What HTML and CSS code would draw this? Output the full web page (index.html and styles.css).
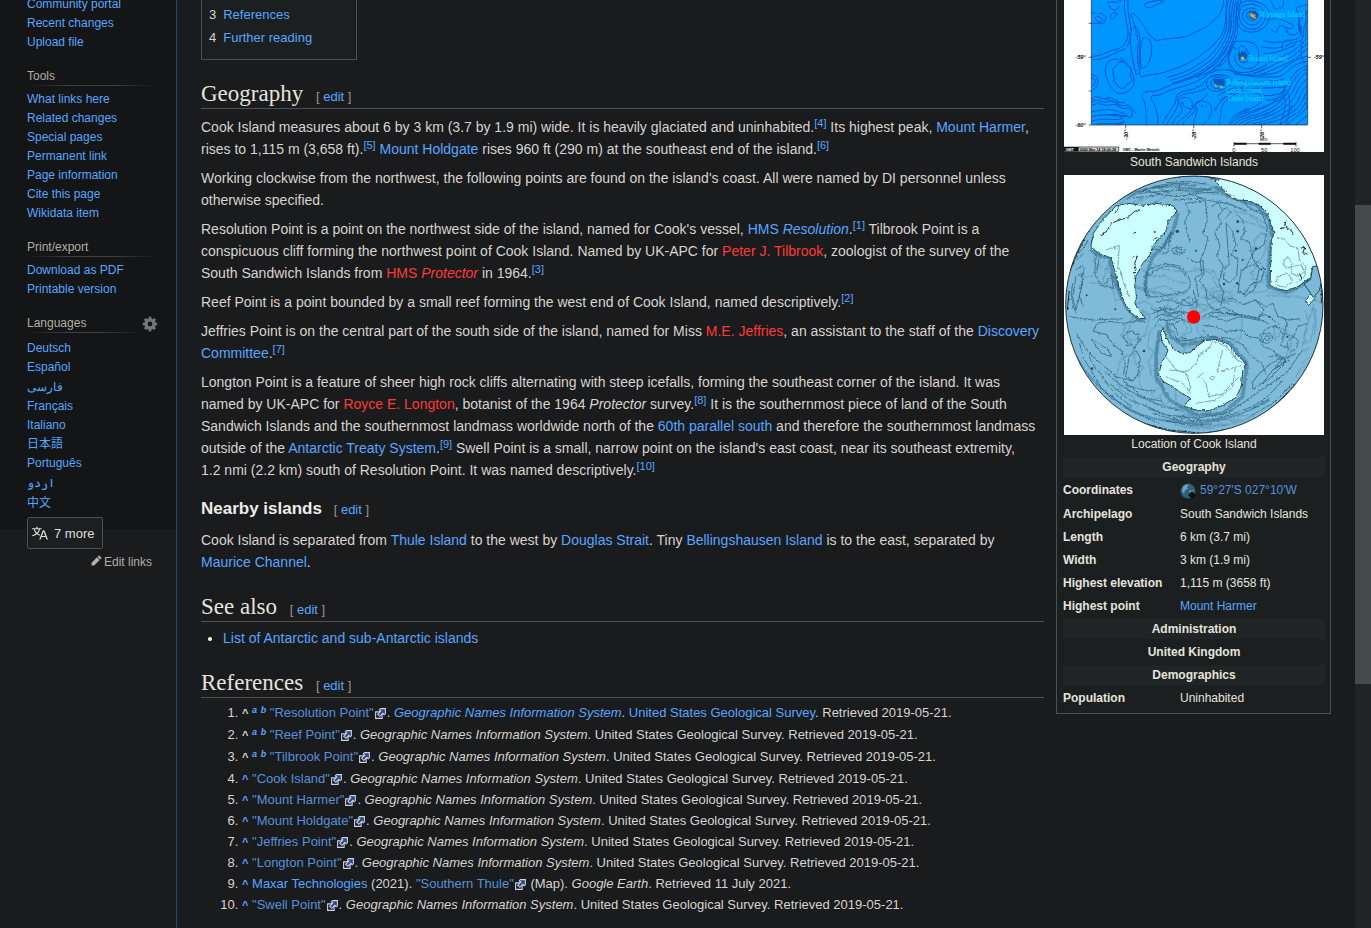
FILE: index.html
```html
<!DOCTYPE html>
<html lang="en">
<head>
<meta charset="utf-8">
<title>Cook Island, South Sandwich Islands</title>
<link rel="stylesheet" href="styles.css">
</head>
<body>
<svg class="defs" aria-hidden="true">
  <symbol id="ext" viewBox="0 0 12 12">
    <path d="M1.5 4.5h6v6h-6z" fill="#1a1b1d" stroke="#cdd3f5"/>
    <path d="M5.8 1H11v5.4L9.4 7.9 8.1 6.6 5.4 9.3 2.7 6.7l2.8-2.8L4.2 2.5z" fill="#cdd3f5"/>
    <path d="M10 2v4.9L8.2 5.1 5.3 8 4.1 6.7 7 3.8 5.1 2z" fill="#2b4a74"/>
  </symbol>
  <filter id="rough" x="-5%" y="-5%" width="110%" height="110%">
    <feTurbulence type="fractalNoise" baseFrequency="0.12" numOctaves="3" seed="7"/>
    <feDisplacementMap in="SourceGraphic" scale="9" xChannelSelector="R" yChannelSelector="G"/>
  </filter>
  <filter id="wavy" x="-5%" y="-5%" width="110%" height="110%">
    <feTurbulence type="fractalNoise" baseFrequency="0.06" numOctaves="2" seed="3"/>
    <feDisplacementMap in="SourceGraphic" scale="6" xChannelSelector="R" yChannelSelector="G"/>
  </filter>
</svg>
<div class="page">
  <nav class="sidebar" aria-label="Site">
    <section class="portal portal-first">
      <ul>
        <li><a href="#">Community portal</a></li>
        <li><a href="#">Recent changes</a></li>
        <li><a href="#">Upload file</a></li>
      </ul>
    </section>
    <section class="portal">
      <h3>Tools</h3>
      <ul>
        <li><a href="#">What links here</a></li>
        <li><a href="#">Related changes</a></li>
        <li><a href="#">Special pages</a></li>
        <li><a href="#">Permanent link</a></li>
        <li><a href="#">Page information</a></li>
        <li><a href="#">Cite this page</a></li>
        <li><a href="#">Wikidata item</a></li>
      </ul>
    </section>
    <section class="portal">
      <h3>Print/export</h3>
      <ul>
        <li><a href="#">Download as PDF</a></li>
        <li><a href="#">Printable version</a></li>
      </ul>
    </section>
    <section class="portal languages">
      <div class="lang-head">
        <h3>Languages</h3>
        <button class="gear" type="button" aria-label="Language settings">
          <svg viewBox="0 0 20 20" width="16" height="16"><g fill="#72777d"><path id="tooth" d="M8.4 1h3.2l.6 4H7.800zM8.400 19h3.200l.6-4H7.800z"/><use href="#tooth" transform="rotate(45 10 10)"/><use href="#tooth" transform="rotate(90 10 10)"/><use href="#tooth" transform="rotate(135 10 10)"/></g><circle cx="10" cy="10" r="5" fill="none" stroke="#72777d" stroke-width="4"/></svg>
        </button>
      </div>
      <ul>
        <li><a href="#">Deutsch</a></li>
        <li><a href="#">Español</a></li>
        <li class="tall"><a href="#" lang="fa">فارسی</a></li>
        <li><a href="#">Français</a></li>
        <li><a href="#">Italiano</a></li>
        <li><a href="#" lang="ja">日本語</a></li>
        <li><a href="#">Português</a></li>
        <li class="tall"><a href="#" lang="ur">اردو</a></li>
        <li class="tall"><a href="#" lang="zh">中文</a></li>
      </ul>
      <button class="more" type="button">
        <svg viewBox="0 0 20 20" width="16" height="16"><path fill="#e0ddd8" d="M20 18h-1.440a.6.6 0 0 1-.4-.12.8.8 0 0 1-.23-.31L17 15h-5l-1 2.540a.8.8 0 0 1-.22.3.6.6 0 0 1-.4.14H9l4.550-11.470h1.890zm-3.530-4.310L14.890 9.500a12 12 0 0 1-.39-1.240q-.09.37-.19.69l-.19.56-1.580 4.190zm-6.300-1.580a13.400 13.400 0 0 1-2.910-1.410 11.460 11.460 0 0 0 2.810-5.370H12V4H7.310a4 4 0 0 0-.2-.56C6.870 2.790 6.600 2 6.600 2l-1.470.5s.4.89.6 1.500H0v1.330h2.150A11.230 11.230 0 0 0 5 10.700a17.200 17.200 0 0 1-5 2.100q.56.82.87 1.380a23.300 23.300 0 0 0 5.220-2.510 15.600 15.600 0 0 0 3.560 1.770zM3.630 5.330h4.910a8.100 8.100 0 0 1-2.450 4.450 9.100 9.100 0 0 1-2.460-4.450"/></svg>
        7 more
      </button>
      <p class="edit-links"><a href="#"><svg viewBox="0 0 20 20" width="11" height="11"><path fill="#b5b1aa" d="M16.770 8l1.940-2a1 1 0 0 0 0-1.410l-3.340-3.300a1 1 0 0 0-1.410 0L12 3.230zM1 14.250V19h4.750l9.960-9.960-4.750-4.750z"/></svg>Edit links</a></p>
    </section>
  </nav>

  <main class="content">
    <article class="article">
      <ul class="toc">
        <li><span>3</span><a href="#references">References</a></li>
        <li><span>4</span><a href="#further">Further reading</a></li>
      </ul>

      <h2>Geography <span class="edit">[ <a href="#">edit</a> ]</span></h2>
      <p>Cook Island measures about 6 by 3 km (3.7 by 1.9 mi) wide. It is heavily glaciated and uninhabited.<sup><a href="#">[4]</a></sup> Its highest peak, <a href="#">Mount Harmer</a>, rises to 1,115 m (3,658 ft).<sup><a href="#">[5]</a></sup> <a href="#">Mount Holdgate</a> rises 960 ft (290 m) at the southeast end of the island.<sup><a href="#">[6]</a></sup></p>
      <p>Working clockwise from the northwest, the following points are found on the island's coast. All were named by DI personnel unless otherwise specified.</p>
      <p>Resolution Point is a point on the northwest side of the island, named for Cook's vessel, <a href="#">HMS <i>Resolution</i></a>.<sup><a href="#">[1]</a></sup> Tilbrook Point is a conspicuous cliff forming the northwest point of Cook Island. Named by UK-APC for <a class="new" href="#">Peter J. Tilbrook</a>, zoologist of the survey of the South Sandwich Islands from <a class="new" href="#">HMS <i>Protector</i></a> in 1964.<sup><a href="#">[3]</a></sup></p>
      <p>Reef Point is a point bounded by a small reef forming the west end of Cook Island, named descriptively.<sup><a href="#">[2]</a></sup></p>
      <p>Jeffries Point is on the central part of the south side of the island, named for Miss <a class="new" href="#">M.E. Jeffries</a>, an assistant to the staff of the <a href="#">Discovery Committee</a>.<sup><a href="#">[7]</a></sup></p>
      <p>Longton Point is a feature of sheer high rock cliffs alternating with steep icefalls, forming the southeast corner of the island. It was named by UK-APC for <a class="new" href="#">Royce E. Longton</a>, botanist of the 1964 <i>Protector</i> survey.<sup><a href="#">[8]</a></sup> It is the southernmost piece of land of the South Sandwich Islands and the southernmost landmass worldwide north of the <a href="#">60th parallel south</a> and therefore the southernmost landmass outside of the <a href="#">Antarctic Treaty System</a>.<sup><a href="#">[9]</a></sup> Swell Point is a small, narrow point on the island's east coast, near its southeast extremity, 1.2&nbsp;nmi (2.2&nbsp;km) south of Resolution Point. It was named descriptively.<sup><a href="#">[10]</a></sup></p>

      <h3>Nearby islands <span class="edit">[ <a href="#">edit</a> ]</span></h3>
      <p>Cook Island is separated from <a href="#">Thule Island</a> to the west by <a href="#">Douglas Strait</a>. Tiny <a href="#">Bellingshausen Island</a> is to the east, separated by <a href="#">Maurice Channel</a>.</p>

      <h2>See also <span class="edit">[ <a href="#">edit</a> ]</span></h2>
      <ul class="see-also">
        <li><a href="#">List of Antarctic and sub-Antarctic islands</a></li>
      </ul>

      <h2 id="references">References <span class="edit">[ <a href="#">edit</a> ]</span></h2>
      <ol class="references">
        <li class="multi"><b>^</b> <sup><a href="#">a</a></sup> <sup><a href="#">b</a></sup> <a class="ext" href="#">"Resolution Point"<svg><use href="#ext"/></svg></a>. <a href="#"><i>Geographic Names Information System</i></a>. <a href="#">United States Geological Survey</a>. Retrieved 2019-05-21.</li>
        <li class="multi"><b>^</b> <sup><a href="#">a</a></sup> <sup><a href="#">b</a></sup> <a class="ext" href="#">"Reef Point"<svg><use href="#ext"/></svg></a>. <i>Geographic Names Information System</i>. United States Geological Survey. Retrieved 2019-05-21.</li>
        <li class="multi"><b>^</b> <sup><a href="#">a</a></sup> <sup><a href="#">b</a></sup> <a class="ext" href="#">"Tilbrook Point"<svg><use href="#ext"/></svg></a>. <i>Geographic Names Information System</i>. United States Geological Survey. Retrieved 2019-05-21.</li>
        <li><a href="#"><b>^</b></a> <a class="ext" href="#">"Cook Island"<svg><use href="#ext"/></svg></a>. <i>Geographic Names Information System</i>. United States Geological Survey. Retrieved 2019-05-21.</li>
        <li><a href="#"><b>^</b></a> <a class="ext" href="#">"Mount Harmer"<svg><use href="#ext"/></svg></a>. <i>Geographic Names Information System</i>. United States Geological Survey. Retrieved 2019-05-21.</li>
        <li><a href="#"><b>^</b></a> <a class="ext" href="#">"Mount Holdgate"<svg><use href="#ext"/></svg></a>. <i>Geographic Names Information System</i>. United States Geological Survey. Retrieved 2019-05-21.</li>
        <li><a href="#"><b>^</b></a> <a class="ext" href="#">"Jeffries Point"<svg><use href="#ext"/></svg></a>. <i>Geographic Names Information System</i>. United States Geological Survey. Retrieved 2019-05-21.</li>
        <li><a href="#"><b>^</b></a> <a class="ext" href="#">"Longton Point"<svg><use href="#ext"/></svg></a>. <i>Geographic Names Information System</i>. United States Geological Survey. Retrieved 2019-05-21.</li>
        <li><a href="#"><b>^</b></a> <a href="#">Maxar Technologies</a> (2021). <a class="ext" href="#">"Southern Thule"<svg><use href="#ext"/></svg></a> (Map). <i>Google Earth</i>. Retrieved 11 July 2021.</li>
        <li><a href="#"><b>^</b></a> <a class="ext" href="#">"Swell Point"<svg><use href="#ext"/></svg></a>. <i>Geographic Names Information System</i>. United States Geological Survey. Retrieved 2019-05-21.</li>
      </ol>
    </article>

    <aside class="infobox">
      <table>
        <tr><td colspan="2" class="figure">
          <svg class="chart" viewBox="42 0 780 456" role="img" aria-label="Chart of the South Sandwich Islands">
            <defs><clipPath id="sea"><path d="M124 0h649v375H124z"/></clipPath></defs>
            <path fill="#fff" d="M42 0h780v459H42z"/>
            <path fill="#0096ff" d="M124 0h649v375H124z"/>
            <g clip-path="url(#sea)"><g filter="url(#wavy)" fill="none" stroke="#0a56cc" stroke-width="3" stroke-linejoin="round">
              <path d="M124 170C160 166 180 150 200 148C225 140 236 120 234 90C228 60 220 30 224 0M124 180C170 178 190 160 212 152C240 142 246 110 241 76C236 50 232 26 234 0"/>
              <path d="M520 0C524 20 512 44 486 66C470 84 440 94 428 100C410 118 350 112 322 122C300 116 288 86 274 68C262 46 246 34 243 44C248 62 258 84 262 112C268 130 258 160 264 190C272 220 266 226 276 230C300 222 330 224 352 214C390 202 430 186 462 158C490 140 518 110 524 80C530 50 526 30 530 0"/>
              <path d="M240 100C250 70 262 78 268 104C274 130 264 160 270 196C272 212 266 220 258 224C252 200 238 130 240 100M283 112C306 108 310 150 300 178C288 210 268 216 272 180C270 150 272 118 283 112"/>
              <path d="M124 40C134 36 142 44 152 40C166 42 172 54 162 68C150 76 130 66 124 72M135 52C146 46 156 54 158 62C150 70 136 64 135 52M170 10C180 0 200 14 214 0M176 14C182 30 200 38 208 18M180 50C186 40 196 30 202 44C190 52 186 60 180 50M284 12C300 2 320 4 338 0M284 12C280 26 306 26 318 14C328 8 340 10 346 0"/>
              <path d="M190 206C206 192 204 182 214 184C226 184 226 196 240 204C252 212 232 222 246 236C250 252 222 250 224 264C200 270 206 248 190 244C198 230 184 220 190 206M172 190C160 210 168 230 176 250C186 270 200 284 216 280C236 276 256 262 252 238C248 214 230 180 214 178C194 178 180 176 172 190"/>
              <path d="M124 234C140 236 138 250 128 258M124 224C150 226 150 256 128 270M124 300C140 276 150 304 170 294C190 288 206 312 224 308M124 308C142 290 152 314 176 304C196 298 204 322 228 316C240 310 246 330 258 340M124 318C148 302 160 322 184 314C200 308 212 332 234 324C250 330 250 350 240 352C220 346 200 340 176 346M124 336C150 330 170 326 196 332C220 342 236 338 228 350C204 350 170 338 124 350M124 364C160 350 190 364 214 356C230 362 222 370 200 375M140 375C160 366 190 376 222 366"/>
              <path d="M290 375C286 350 292 320 280 300C268 284 284 270 300 274C320 278 340 262 356 258C400 240 440 236 470 208C500 186 530 150 542 120M322 375C328 350 318 330 312 310C296 292 304 284 326 286C344 276 366 268 390 262C430 250 460 238 484 212C510 190 540 160 548 124"/>
              <path d="M336 375C350 340 374 320 378 300C376 280 396 274 420 270C450 264 462 250 470 236M350 375C360 350 386 330 384 304C384 286 400 280 430 278C452 270 470 272 476 256M366 375C372 350 400 340 396 326C384 308 392 290 404 292C440 296 420 320 430 324C410 330 396 318 398 306M380 375C392 352 420 344 424 328C440 306 460 300 474 280M398 375C402 352 432 350 436 326C430 300 452 300 468 306C492 314 486 340 476 356C470 366 460 370 462 375M430 375C432 350 444 340 440 322"/>
              <path d="M536 0C524 30 534 60 528 88C518 124 498 148 478 170C440 200 400 222 352 232M544 0C532 34 542 66 534 94C526 128 506 154 486 178C446 210 402 232 356 242M552 0C540 30 550 70 540 98C534 132 514 162 490 186C452 218 410 238 366 250M558 0C546 34 556 74 548 100C540 134 522 164 498 190C470 214 440 226 404 242M566 0C552 30 562 72 554 102C548 130 534 160 512 190C490 210 466 222 440 232M574 0C564 26 562 70 562 100C556 126 542 160 524 186C506 206 494 212 482 220"/>
              <path d="M586 30C606 18 630 26 634 46C636 72 606 84 588 68C574 54 574 40 586 30M578 18C610 4 642 20 646 46C646 86 602 98 580 78C562 58 564 32 578 18M570 10C610 -8 654 10 660 44C660 92 600 110 572 86C554 62 556 28 570 10M594 36C610 28 626 36 624 50C616 66 598 62 592 54C588 46 590 40 594 36"/>
              <path d="M664 90C680 96 674 112 686 80C700 70 706 84 714 100C730 112 744 100 750 90C742 70 752 60 740 30C734 18 760 20 773 12M660 0C676 20 664 30 690 26C706 16 700 0 700 0M650 60C690 50 700 62 720 70C740 76 726 96 706 80M773 30C760 50 744 60 748 80C760 100 752 116 730 120C700 120 690 138 700 150M773 60C756 80 764 100 756 118C744 130 720 124 708 140"/>
              <path d="M560 150C540 130 540 124 568 124C600 120 628 130 626 164C630 190 618 208 586 206C560 200 550 180 556 160M568 152C562 134 584 132 592 152C606 176 592 190 578 188C562 182 566 166 568 152M548 140C522 164 540 196 556 214C580 222 616 216 636 200M542 152C528 180 536 206 556 222C590 230 628 222 650 196"/>
              <path d="M486 240C494 228 520 230 526 246C526 260 500 272 488 262C480 254 482 248 486 240M474 238C484 220 530 218 542 238C560 260 500 282 482 270C466 260 468 250 474 238M480 220C500 206 540 206 570 220C590 232 640 232 690 230C712 220 724 190 773 184M530 208C550 214 570 230 610 226C650 226 690 220 700 206C720 190 740 176 773 168"/>
              <path d="M773 196C740 206 724 230 716 250C700 270 690 296 650 320C610 340 560 350 538 375M773 206C746 214 730 240 720 262C708 290 690 310 660 326C620 350 570 350 552 375M773 218C750 226 740 250 728 274C710 304 690 320 666 334C630 352 590 352 566 375M773 236C756 246 744 266 734 290C716 316 700 324 672 342C646 356 608 358 580 375M773 256C752 270 754 290 740 308C720 330 704 336 680 350C656 362 628 364 600 375M773 272C758 290 762 304 744 322C728 342 712 342 690 358C670 366 650 368 620 375M773 296C764 310 758 330 740 340C720 350 706 364 690 375M773 320C762 336 740 350 724 362L712 375M773 346C764 350 752 362 738 375"/>
              <path d="M536 375C550 352 574 340 600 336C634 324 660 312 690 300C706 284 700 262 704 250M540 362C550 346 576 332 600 326C630 316 640 300 634 286C616 274 600 280 580 270C560 280 540 290 520 310C510 330 516 340 506 375M496 330C510 300 530 290 554 276M700 290C714 310 700 340 690 375M716 286C724 310 716 350 708 375M752 120C760 140 744 160 764 190"/>
              <path d="M773 112C750 136 730 160 690 172C660 180 640 206 600 214M773 128C752 148 736 170 700 182C670 190 650 212 612 220M773 144C756 160 730 184 706 192C680 202 660 216 630 224M640 120C660 130 700 130 716 118M634 140C660 146 690 148 720 132M640 160C664 160 700 156 740 130M560 240C600 250 660 246 700 238M566 262C610 268 660 262 706 262M640 286C670 290 690 280 712 270M650 300C676 300 690 292 716 278M500 290C520 276 540 266 560 262M508 302C530 286 556 276 580 262"/>
              <path stroke-width="4" opacity=".6" d="M540 40C544 60 536 80 542 98M740 70C756 86 758 92 748 100M562 340L600 330M640 350L680 326M700 356C710 346 720 330 734 318M768 30V110M770 200V330M480 232C490 224 520 224 528 238M160 296C180 296 190 310 210 308"/>
              <circle cx="215" cy="186" r="2"/><circle cx="456" cy="317" r="2"/>
            </g></g>
            <path fill="#083b9c" opacity=".65" d="M566 156l6 4 4-10 4 8 6-8 2 12 6-2-4 16-22 2zM490 236l30 2 4 20-30-4zM598 36l18-2 8 12-6 14-20-6z"/>
            <path fill="#d7a62a" d="M598 42l8-3 5 5 6-1-2 7 5 5-5 3-4-5-8-1zM572 172l6-3 6 4-2 7-8 1zM494 252l6 2 2 6-8-2zM508 257l10 1 3 5-9 1z"/>
            <g class="place-names"><text x="626" y="52">Montagu Island</text><text x="593" y="184">Bristol Island</text><text x="528" y="254">Bellingshausen Island</text><text x="528" y="279">Cook Island</text><text x="530" y="302">Thule Island</text></g>
            <path fill="none" stroke="#222" stroke-width="2" d="M124 0v375h649M116 70h8M116 172h8M116 273h8M116 375h8M773 172h10M227 375v10M431 375v10M635 375v10M773 0v375"/>
            <g class="degrees"><text x="76" y="178">-59°</text><text x="76" y="382">-60°</text><text x="791" y="178">-59°</text><text transform="translate(234 420) rotate(-90)">-30°</text><text transform="translate(438 420) rotate(-90)">-28°</text><text transform="translate(642 420) rotate(-90)">-26°</text></g>
            <g class="scale"><text x="630" y="423">km</text><text x="547" y="456">0</text><text x="633" y="456">50</text><text x="721" y="456">100</text></g>
            <path fill="#111" d="M42 440h44v15H42zM552 428h38v6h-38zM626 428h36v6h-36zM700 428h38v6h-38z"/>
            <path fill="#ddd" stroke="#111" stroke-width="2" d="M86 441h120v13H86z"/>
            <path fill="none" stroke="#111" stroke-width="2" d="M552 426v14M738 426v14M552 431h186"/>
            <g class="imprint"><text x="47" y="452" fill="#fff">GMT</text><text x="89" y="452">2006 Mar 14 18:00:28</text><text x="218" y="452">OMC - Martin Weinelt</text></g>
          </svg>
          <div class="caption">South Sandwich Islands</div>
        </td></tr>
        <tr><td colspan="2" class="figure">
          <svg class="globe" viewBox="24 15 780 780" role="img" aria-label="Location of Cook Island on a globe">
            <defs><clipPath id="disc"><circle cx="415" cy="404" r="386"/></clipPath></defs>
            <path fill="#fff" d="M24 15h780v780H24z"/>
            <circle cx="415" cy="404" r="386" fill="#7ebbd9"/>
            <g clip-path="url(#disc)">
              <g fill="none" stroke="#39708f" stroke-width="11" opacity=".55" stroke-linejoin="round" filter="url(#rough)">
                <path d="M104 240L130 258L160 262L172 320L190 370L214 416L244 446L270 450M366 130L352 180L322 230L290 260L270 320L268 360L280 384M480 50L520 80L600 104L640 150L650 200L640 260L636 350L690 366L730 350L790 310M330 460L345 500L380 524L420 520L470 502L520 520L574 580L560 680L500 730L420 735L340 690L300 620L300 560L310 480"/>
                <path stroke-width="6" d="M70 200C110 130 180 80 260 60C330 40 400 60 470 60M60 560C120 660 220 740 330 752C420 770 520 760 640 690"/>
              </g>
              <use href="#seabed" transform="rotate(184 415 404)" opacity=".45"/>
              <g fill="#ccffff" stroke="#24485c" stroke-width="3" stroke-linejoin="round" filter="url(#rough)">
                <path d="M104 232L112 190L140 150L180 108L214 100L260 106L300 100L352 108L364 124L350 140L336 156L330 186L306 208L290 230L282 254L260 280L250 300L240 316L236 350L242 380L236 398L244 414L268 444L250 446L226 430L206 400L190 356L178 310L166 264L150 258L132 252Z"/>
                <path d="M476 32L500 24C600 -10 840 100 820 300L788 296L770 290L764 322L744 336L726 350L690 362L662 356L642 346L644 280L646 210L654 190L644 160L634 130L612 108L578 92L540 90L512 72L494 50Z"/>
                <path d="M748 392L764 372L780 366L776 386L756 408Z"/>
                <path d="M322 474L330 500L340 520L356 540L380 550L402 548L424 528L446 512L480 508L520 524L544 556L570 580L560 604L556 650L540 682L500 706L460 722L424 722L384 708L404 684L380 672L350 650L324 636L308 616L316 580L330 556L336 540L318 516L314 488Z"/>
              </g>
              <path fill="#7bb8d8" stroke="#24485c" stroke-width="3" d="M770 290l10-2 22 24-12 50-18 20-28-40 20-14z"/>
              <g fill="none" stroke="#1e2c33" stroke-width="3" stroke-linejoin="round" filter="url(#rough)">
                <path d="M164 160L196 148L214 144L236 124L252 120M132 196L150 186L164 164M230 262L244 258L236 280L240 298L230 312M176 130L190 112M672 176l18-4 14 8 10 14M690 150l-4 18M732 230l14 4-6 14 14 4M230 190l12-4M292 210l12-8M730 310l8 16"/>
                <path d="M30 330C60 260 80 210 110 160C130 130 160 100 200 80M360 20C420 14 460 20 480 28M34 420l6-60M250 756L340 780L440 790L520 778M660 704L720 640M796 340v60"/>
              </g>
              <g id="seabed" fill="none" stroke="#2c5a74" stroke-width="2.200" stroke-linejoin="round" filter="url(#rough)">
                <path d="M280 250l20-24 24 10 14-40 16-8M290 240c20-10 24 20 46 6l8-60M276 300c-10 40-12 60-4 78c30 10 80-8 110-12c30-6 24-40 6-60c-20-30-70-30-110-6M280 316c30-30 80-44 110 0M346 240c14-14 40-10 40 2c-6 14-36 16-40-2M356 240c8-6 20-4 22 2c-6 6-18 6-22-2M392 264l30 14 18-6 4 40-14 20 20 26 4 40 20 24 30-10 40 20"/>
                <path d="M388 100l60-8 6 60-14 40 16 10-10 40-14 30 6 40-20 10 10 60M388 100l12 26-14 30 16 60M466 110l20-12 14 24-14 16 10 20-20 30 16 40-10 30 20 30-14 50 14 30-8 40M500 120c8-10 24-6 22 10l-18 20M510 160l20 24 10 40-14 30 20 14-4 50-20 20-20-10 4-34 14-10zM540 130l20 20 8 36-14 20 26 10 10 50 20 30-14 60-24 20-30-10M560 90l20 24 40 20 14 40-10 50-30 20-20 40-14 20M556 300l50-24 20 20-10 36-30 10-20 30-20-10z"/>
                <path d="M600 390l30 20 20-10 16 40 30 10 40-4M460 370l30 24 40-10 30 20 40-14 24 30-20 30-50-10-44 14-50-20M470 410l30 20 60 4 30 10 40-10 40 30M438 440l30-14 60 6 70 10 40 20"/>
                <path d="M438 466l40 4 30 14 50-4 20 20 30 4 14 26 30 10 20 30 50-20M440 480l20 20 60 4 40 20 20 30 40 30 10 30M610 500l20-24 30-10 24 30-10 30 20 6M616 502c10-20 30-16 34 0c-6 24-30 24-34 0M626 504c4-8 14-8 16 0c-4 10-14 10-16 0M700 540c-20-20 10-50 24-30c8 16-10 40-24 30M680 440l14 20-10 30 30 10 10-30 30-10M590 636c30-40 60-60 90-76l10 16-50 50-50 30zM620 640l30-40 50-30M560 700l70-50 60-40 50-70"/>
                <path d="M112 484l10-24 40-6 40 6 40-8 30 6M112 484l40 10 20 30 26 20 10 40-6 30M200 500l14-12 16-6 6 12 14-2-6 14 12 4-14 10-6 14-10-10-16 4 4-12zM106 508l50 30 10 22-30-10zM220 560l20-18 12 20-6 50-14 20-24-10zM60 490l40 60 80 70 50 14M128 600c30 60 60 80 100 110M140 600l60 50 60 34 60 10M160 640l60 50 90 34M200 630l60 50 60 30 50 10M80 560l60 100 80 60 90 40M208 646c30 6 60 20 90 16M70 520l10 30M100 560l20 40"/>
                <path d="M50 380l10-60 16-10 4 30-20 80zM60 300c20-20 30-10 20 20l-10 60 14 30M120 250l-4 60 20 36 40 10M130 260l-8 50M60 250c10 0 20-10 36-40M50 340c-8 40 0 70 10 90M62 270l20-20M150 340l16-26 6 40M40 440l70 10 90-4"/>
                <path d="M210 88c60-40 120-50 190-48M230 84l80-10 60 6 50-10 70-4M250 70l120-10 60 4 50-14M290 54l60-10 70 4M330 38l60-4 60 8M350 90l90-6M400 72l60 20 60 10 50 20M260 60l60 14M370 40v26M300 48l40 22"/>
                <path d="M284 416l20 8 20-10 30 6 20-16 30 4M290 430l30-10 20 14 40-10 20 6M300 396l40-6 30 10 30-20 20 20M288 448l30-16 40 10 30-14M296 470l14-24 20 6 40-8 30 14M350 460l20 40 30 10 50-10M346 480l20 30 60 4M410 360l14 40-4 16M378 386l30 20 20-16M310 410l30 20 30-6M322 446l20 20 30-12"/>
                <path d="M276 716l60 20 90 8 90-16 60-40M290 730l80 24 100-4 80-24M330 752l70 14 80-6M560 720c40-10 80-40 120-90M590 716l50-30M580 740l70-40 60-60M350 742l20 10 20-10 20 14 20-10M640 560l30-6 8 14-20 20M650 600l40-30"/>
              </g>
              <g fill="none" stroke="#7593a0" stroke-width="2.500" stroke-linejoin="round" filter="url(#rough)">
                <path d="M430 560l30-26 10-20 40 14 30 40 20 10M340 600l50 6 30-24 10-30 30-20M330 560l30 40 30 10 14 40-10 20M500 540l-10 40-6 26 40-10 32-10M526 540l14 26M430 620l20 20 8 40 40-8 30-30 20-20M440 610l-16 14M462 624c4-8 14-6 14 0c-4 6-12 6-14 0M420 700l60-10 50-40 8-60M330 620l50 20 24 30M150 240l40-14-4 60 20 60 16 40M178 240l-4-12M480 60l60 20"/>
                <path d="M656 206l26-2 20 24 24 6 4 34 20 22-4 30-26 20M664 320l30-10 16 20-20 22-30-6zM684 268l14-6 10 20-10 14-14-8zM706 290l30-6 10 22-20 12-20-8z"/>
              </g>
              <g fill="#24485c"><circle cx="545" cy="155" r="4"/><circle cx="545" cy="184" r="4"/><circle cx="364" cy="184" r="5"/><circle cx="544" cy="340" r="4"/><circle cx="600" cy="236" r="4"/><circle cx="540" cy="242" r="3"/><circle cx="264" cy="543" r="4"/><circle cx="108" cy="596" r="4"/><circle cx="420" cy="242" r="3"/><circle cx="504" cy="342" r="4"/><circle cx="616" cy="298" r="3"/><circle cx="178" cy="418" r="3"/><circle cx="560" cy="270" r="3"/><circle cx="92" cy="376" r="3"/><circle cx="296" cy="186" r="3"/><circle cx="694" cy="500" r="3"/><circle cx="640" cy="440" r="3"/></g>
            </g>
            <circle cx="415" cy="404" r="386" fill="none" stroke="#1d3542" stroke-width="3"/>
            <circle cx="413" cy="441" r="20" fill="#f00"/>
          </svg>
          <div class="caption">Location of Cook Island</div>
        </td></tr>
        <tr><th colspan="2" class="band">Geography</th></tr>
        <tr class="coords"><th scope="row">Coordinates</th><td><a class="ext" href="#"><svg viewBox="0 0 16 16" width="16" height="16"><circle cx="8" cy="8" r="7.500" fill="#2c6078"/><path fill="#6ea3b8" d="M3 4c2-3 5-3 6-2L7 4l1 2-3 1-1 4-2-3zM9 8l4-1 1 3-3 3z"/><path fill="#0c0f11" d="M12 8l4 4-4 4-4-4z"/></svg>59°27′S 027°10′W</a></td></tr>
        <tr><th scope="row">Archipelago</th><td>South Sandwich Islands</td></tr>
        <tr><th scope="row">Length</th><td>6 km (3.7 mi)</td></tr>
        <tr><th scope="row">Width</th><td>3 km (1.9 mi)</td></tr>
        <tr><th scope="row">Highest elevation</th><td>1,115 m (3658 ft)</td></tr>
        <tr><th scope="row">Highest point</th><td><a href="#">Mount Harmer</a></td></tr>
        <tr><th colspan="2" class="band">Administration</th></tr>
        <tr><th colspan="2" class="center">United Kingdom</th></tr>
        <tr><th colspan="2" class="band">Demographics</th></tr>
        <tr><th scope="row">Population</th><td>Uninhabited</td></tr>
      </table>
    </aside>
  </main>
  <div class="scrollbar" aria-hidden="true"><div class="thumb"></div></div>
</div>
</body>
</html>
```

FILE: styles.css
```css
* { box-sizing: border-box; }

body {
  margin: 0;
  background: #1a1b1d;
  color: #d8d4cf;
  font: 14px/22px "Liberation Sans", Arial, "Noto Sans CJK JP", sans-serif;
}

a { color: #58a6ff; text-decoration: none; }
a:hover { text-decoration: underline; }
a.new { color: #ff3939; }
a.ext { color: #5791d8; }
ul, ol { margin: 0; padding: 0; }
button { font: inherit; cursor: pointer; }

.defs { position: absolute; width: 0; height: 0; }

.page {
  display: flex;
  height: 100vh;
  overflow: hidden;
}

/* Sidebar */
.sidebar {
  flex: 0 0 177px;
  padding: 0 18px 0 27px;
  border-right: 1px solid #0d4d80;
  background: linear-gradient(#131516 529px, #1a1b1d 529px);
  font-size: 12px;
  line-height: 19px;
}
.portal { margin-bottom: 15px; }
.portal-first { margin-top: -5px; }
.portal ul { list-style: none; }
.portal h3 {
  margin: 0 0 4px;
  padding-bottom: 1px;
  background: linear-gradient(to right, transparent, #3d4144 33%, #3d4144 66%, transparent) bottom / 100% 1px no-repeat;
  color: #b3ada3;
  font-size: 12px;
  font-weight: 400;
  line-height: 18px;
}
.portal li.tall { line-height: 20px; }
.lang-head { display: flex; align-items: center; margin-bottom: 6px; }
.lang-head h3 { flex: 1; margin: 0; }
.gear { display: flex; padding: 0; border: 0; background: none; }
.more {
  display: flex;
  align-items: center;
  gap: 6px;
  height: 32px;
  margin-top: 4px;
  padding: 0 8px 0 4px;
  border: 1px solid #4b5052;
  border-radius: 2px;
  background: #1b1f20;
  color: #e0ddd8;
  font-size: 13px;
}
.edit-links { margin: 4px 6px 0 0; text-align: right; }
.edit-links a { color: #b3ada3; }
.edit-links svg { margin-right: 2px; }

/* Article */
.content {
  display: flex;
  flex: 1;
  align-items: flex-start;
  gap: 12px;
  min-width: 0;
  padding: 0 24px;
}
.article { flex: 1; min-width: 0; }

.toc {
  width: 156px;
  height: 60px;
  padding: 3px 7px;
  border: 1px solid #4b5052;
  border-top: 0;
  background: #1b1f20;
  font-size: 13px;
  line-height: 23px;
  list-style: none;
}
.toc span { margin-right: 7px; }

h2 {
  margin: 18px 0 0;
  padding-top: 2px;
  border-bottom: 1px solid #4b5052;
  color: #e6e3de;
  font: 400 23px/28px "Liberation Serif", serif;
}
.article h3 {
  margin: 15px 0 0;
  color: #eeece8;
  font-size: 17px;
  line-height: 26px;
}
.edit {
  margin-left: 7px;
  color: #9d9688;
  font: 400 13px/20px "Liberation Sans", Arial, sans-serif;
}
.article p { margin: 7px 0; }
.article p + h3 { margin-top: 15px; }
sup { font-size: 11px; line-height: 1; vertical-align: 5px; }

.see-also { margin-top: 5px; padding-left: 22px; }
.see-also li::marker { color: #fff; }

.references {
  margin-top: 4px;
  padding-left: 41px;
  font-size: 13px;
  line-height: 21px;
}
.references .multi { height: 22px; }
.references b { font-size: 11px; line-height: 1; }
.references sup { font-size: 9px; font-style: italic; font-weight: 700; vertical-align: 4px; }
.references .ext svg { width: 13px; height: 13px; vertical-align: -3px; }

/* Infobox */
.infobox {
  flex: 0 0 275px;
  padding: 0 2px 2px 3px;
  border: 1px solid #4b5052;
  border-top: 0;
  background: #1b1f20;
  color: #e6e3de;
  font-size: 12px;
  line-height: 20px;
}
.infobox table { width: 100%; margin-top: -3px; border-spacing: 3px; }
.infobox th, .infobox td { padding: 0; text-align: left; vertical-align: top; }
.infobox th[scope="row"] { width: 114px; }
.infobox .coords { line-height: 21px; }
.infobox .coords svg { margin-right: 4px; vertical-align: -5px; }
.infobox .figure { text-align: center; }
.infobox .band, .infobox .center { text-align: center; }
.infobox .band { background: #212425; }
.figure svg { display: block; width: 260px; margin: 0 auto; }
.caption { line-height: 19px; }
.figure .chart { margin-bottom: 1px; }
.caption { line-height: 19px; }
.place-names { fill: #00dcff; font: 22px "Liberation Serif", serif; }
.degrees { fill: #111; font: italic 700 17px "Liberation Sans", sans-serif; }
.scale { fill: #111; font: 17px "Liberation Sans", sans-serif; }
.imprint { font: 700 11px "Liberation Sans", sans-serif; }

/* Window scrollbar */
.scrollbar {
  display: grid;
  flex: 0 0 16px;
  grid-template-rows: 205fr 479fr 244fr;
  background: #202425;
}
.thumb { grid-row: 2; background: #454a4c; }
```
